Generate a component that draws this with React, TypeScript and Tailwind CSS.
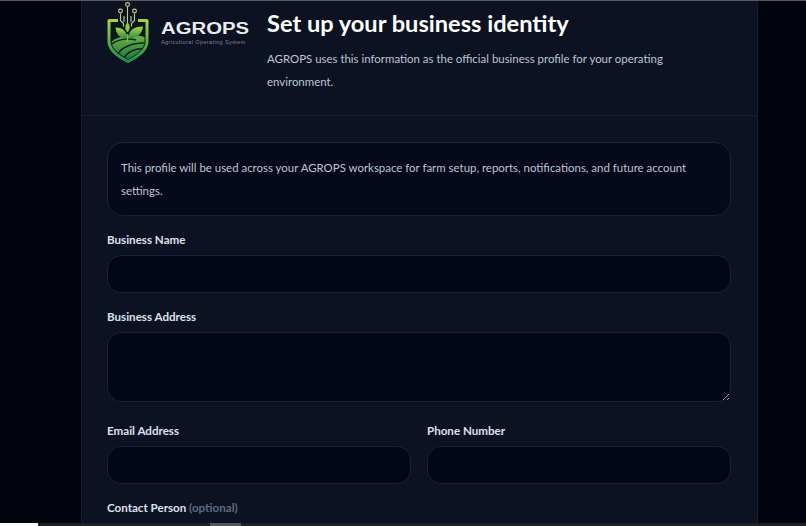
const inputClass = 'block w-full h-[38px] rounded-[14px] border border-[#1a2236] bg-[#030617] outline-none';
const labelClass = 'block text-[11.600px] leading-[16px] font-bold text-[#dbe2ec] mb-[7px]';

function Logo() {
  return (
    <div className="flex items-start w-[160px] shrink-0">
      <svg viewBox="107 0 42 63" className="w-[42px] h-[63px] shrink-0" fill="none">
        <defs>
          <linearGradient id="shieldEdge" x1="0" y1="0" x2="0" y2="1">
            <stop offset="0" stopColor="#a9cf45" />
            <stop offset="1" stopColor="#1d8f4a" />
          </linearGradient>
          <linearGradient id="leaf" x1="0" y1="0" x2="0" y2="1">
            <stop offset="0" stopColor="#a6d455" />
            <stop offset="1" stopColor="#2f8f3e" />
          </linearGradient>
          <linearGradient id="field" x1="0" y1="0" x2="0" y2="1">
            <stop offset="0" stopColor="#6cb044" />
            <stop offset="1" stopColor="#1f7a3e" />
          </linearGradient>
        </defs>
        <path d="M118 20.500H109v21c0 9 11 16 19 20 8-4 19-11 19-20v-21h-9" stroke="url(#shieldEdge)" strokeWidth="3" strokeLinejoin="round" fill="#0a1718" />
        <path d="M111.500 42c5-5 20-9 33-5v5c0 7-9 13-16.500 17-7-4-16.500-10-16.500-17z" fill="url(#field)" />
        <path d="M112 44c6-5 16-6 24-4M118 54c3-6 13-11 26-11M124 57.500c3-5 10-9 19-9" stroke="#0b1f1c" strokeWidth="1.500" />
        <path d="M127.500 38.500c-1-7-4-11-12-11 1 7 4 11 12 11z" fill="url(#leaf)" />
        <path d="M128 38.500c1-8 5-12 15-12-1 8-6 12-15 12z" fill="url(#leaf)" />
        <path d="M127.500 22.500c3.500 3.500 2.500 7 0 10-2.500-3-3.500-6.500 0-10z" fill="#8cc44a" />
        <path d="M127.500 42v-8" stroke="#7fbe45" strokeWidth="1.400" />
        <path d="M127.500 7v16M120.500 13.500v7l3 3v3M134.500 13.500v7l-3 3v3M124 16v6M131 16v6" stroke="#b9cf8a" strokeWidth="1.100" />
        <circle cx="127.500" cy="4.500" r="1.900" stroke="#d8cc7c" strokeWidth="1.100" />
        <circle cx="120.500" cy="11" r="1.900" stroke="#d8cc7c" strokeWidth="1.100" />
        <circle cx="134.500" cy="11" r="1.900" stroke="#d8cc7c" strokeWidth="1.100" />
      </svg>
      <div className="ml-[12px] mt-[20px] flex flex-col">
        <span className="font-['Liberation_Sans',sans-serif] text-[16px] leading-[18px] font-bold text-[#e9ecef] scale-x-[1.27] origin-left">AGROPS</span>
        <span className="font-['Liberation_Sans',sans-serif] text-[5.500px] leading-[6px] tracking-[0.4px] mt-[1px] text-[#7f8794] whitespace-nowrap">Agricultural Operating System</span>
      </div>
    </div>
  );
}

function Field({ label, hint }: { label: string; hint?: string }) {
  return (
    <div className="flex-1 min-w-0">
      <label className={labelClass}>
        {label}
        {hint && <span className="text-[#5f6b80]"> {hint}</span>}
      </label>
      <input className={inputClass} />
    </div>
  );
}

export default function App() {
  return (
    <div className="relative h-screen overflow-hidden bg-[#01030f] font-['Lato',sans-serif]">
      <div className="ml-[81px] w-[677px] border-x border-[#161d2d] bg-[#0c1222]">
        <header className="flex h-[116px] border-b border-[#171e2e] pl-[25px]">
          <Logo />
          <div className="pr-[70px] pt-[1px]">
            <h1 className="text-[23.600px] leading-[44px] font-bold text-white whitespace-nowrap">Set up your business identity</h1>
            <p className="text-[11.450px] leading-[23px] text-[#bcc6d4] mt-[2px]">
              AGROPS uses this information as the official business profile for your operating environment.
            </p>
          </div>
        </header>
        <div className="pl-[25px] pr-[26px] pt-[26px]">
          <div className="h-[74px] rounded-[16px] border border-[#1a2236] bg-[#050919] px-[13px] py-[13px] text-[11.450px] leading-[23px] text-[#bcc6d4]">
            This profile will be used across your AGROPS workspace for farm setup, reports, notifications, and future account settings.
          </div>
          <div className="mt-[16px]">
            <Field label="Business Name" />
          </div>
          <div className="mt-[16px]">
            <label className={labelClass}>Business Address</label>
            <textarea className="block w-full h-[70px] rounded-[14px] border border-[#1a2236] bg-[#030617] outline-none" />
          </div>
          <div className="mt-[21px] flex gap-[16px]">
            <Field label="Email Address" />
            <Field label="Phone Number" />
          </div>
          <div className="mt-[16px]">
            <Field label="Contact Person" hint="(optional)" />
          </div>
        </div>
      </div>
      <div className="absolute top-0 inset-x-0 h-px bg-[#55585e]" />
      <div className="absolute bottom-0 inset-x-0 h-[3px] bg-[#1f2023]">
        <div className="absolute left-0 top-0 h-full w-[38px] bg-white" />
        <div className="absolute left-[210px] top-0 h-full w-[31px] bg-[#55565a]" />
      </div>
    </div>
  );
}
